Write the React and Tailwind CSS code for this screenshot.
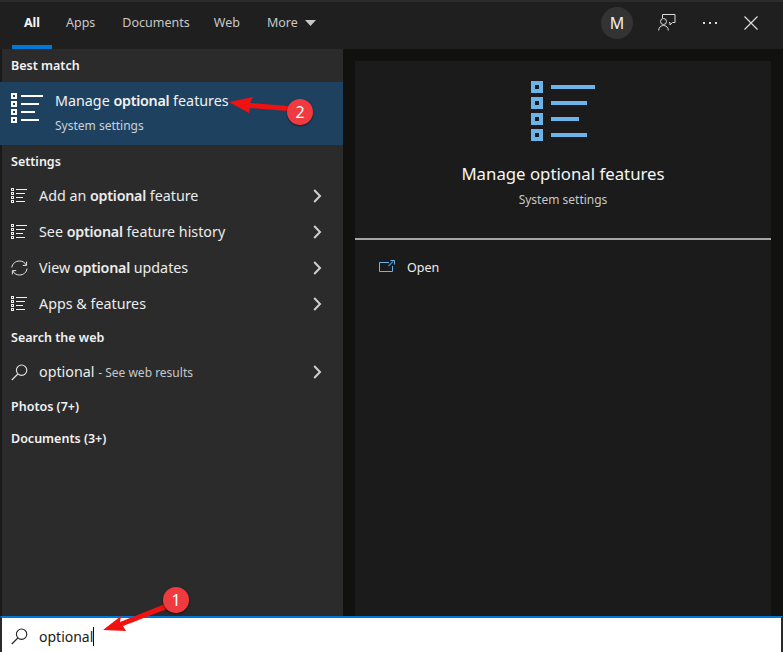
import React from "react";

const font = { fontFamily: '"Noto Sans", sans-serif' };

function ListIcon() {
  // small settings list glyph
  return (
    <svg width="17" height="16" viewBox="0 0 17 16" fill="none" stroke="#f0f0f0" strokeWidth="1">
      <rect x="0.5" y="0.5" width="2" height="2" />
      <rect x="0.5" y="4.5" width="2" height="2" />
      <rect x="0.5" y="8.5" width="2" height="2" />
      <rect x="0.5" y="12.5" width="2" height="2" />
      <path d="M5 1.5h11M5 5.5h9M5 9.5h7M5 13.5h9" />
    </svg>
  );
}

function RefreshIcon() {
  return (
    <svg width="17" height="16" viewBox="0 0 17 16" fill="none" stroke="#e6e6e6" strokeWidth="1">
      <path d="M0.8 7.5C1.5 3.5 4.5 1 8.5 1C11.5 1 14 2.5 15.2 5" />
      <path d="M15.6 1.6v3.8h-3.8" />
      <path d="M16 8.5C15.5 12.5 12.5 15 8.5 15C5.5 15 3 13.5 1.8 11" />
      <path d="M1.4 14.4v-3.8h3.8" />
    </svg>
  );
}

function SearchIcon({ color = "#e6e6e6" }) {
  return (
    <svg width="17" height="17" viewBox="0 0 17 17" fill="none" stroke={color} strokeWidth="1.1">
      <circle cx="10.6" cy="6.2" r="5.2" />
      <path d="M6.8 10L0.8 16" />
    </svg>
  );
}

function Chevron() {
  return (
    <svg width="9" height="14" viewBox="0 0 9 14" fill="none" stroke="#cfcfcf" strokeWidth="2">
      <path d="M1.2 1L7 7L1.2 13" />
    </svg>
  );
}

function Heading({ className = "pt-[1px]", children }) {
  return <div className={"h-[32px] pl-[11px] flex items-center text-[12.5px] font-semibold text-[#f2f2f2] " + className}>{children}</div>;
}

function Row({ icon, children }) {
  return (
    <div className="h-[36px] pl-[11px] pr-[21px] flex items-center text-[14.3px] text-[#ececec]">
      <div className="w-[28px] flex items-center">{icon}</div>
      <div className="flex-1">{children}</div>
      <Chevron />
    </div>
  );
}

function Hit({ children }) {
  return <span className="font-semibold tracking-[-0.25px]">{children}</span>;
}

function BigList() {
  return (
    <svg width="64" height="60" viewBox="0 0 64 60" fill="none">
      {[0, 16, 32, 48].map((y) => (
        <g key={y}>
          <rect x="0" y={y} width="12" height="12" fill="#6cb3ea" />
          <rect x="4" y={y + 4} width="4" height="4" fill="#1c1b1b" />
        </g>
      ))}
      <path d="M20 4h44v4H20zM20 20h36v4H20zM20 36h28v4H20zM20 52h36v4H20z" fill="#6cb3ea" />
    </svg>
  );
}

function Badge({ className, children }) {
  return (
    <div className={"absolute w-[26px] h-[26px] rounded-full bg-[#ef3b3f] text-white text-[16px] flex items-center justify-center shadow-[0_1px_2px_rgba(0,0,0,0.6)] " + className}>
      {children}
    </div>
  );
}

export default function App() {
  return (
    <div style={font} className="relative w-[783px] h-[652px] overflow-hidden bg-[#111110] flex flex-col">
      {/* top bar */}
      <div className="h-[49px] shrink-0 bg-[#1f1f1f] border-t-2 border-[#2b2b2b] flex items-stretch justify-between">
        <div className="flex items-stretch pl-[12px] text-[12.5px] text-[#c8c8c8]">
          <div className="w-[40px] pb-[1px] flex items-center justify-center font-bold text-[#f5f5f5] border-b-[4px] border-[#0078d7]">All</div>
          <div className="ml-[14px] pb-[5px] flex items-center">Apps</div>
          <div className="ml-[27px] pb-[5px] flex items-center">Documents</div>
          <div className="ml-[24px] pb-[5px] flex items-center">Web</div>
          <div className="ml-[27px] pb-[5px] flex items-center gap-[7px]">
            More
            <svg width="11" height="6" viewBox="0 0 11 6"><path d="M0 0h11L5.5 6z" fill="#c8c8c8" /></svg>
          </div>
        </div>
        <div className="flex items-center pb-[6px] pr-[25px] text-[#dcdcdc]">
          <div className="w-[32px] h-[32px] rounded-full bg-[#333333] flex items-center justify-center text-[16px] text-[#f0f0f0]">M</div>
          <svg className="ml-[25px]" width="18" height="17" viewBox="0 0 18 17" fill="none" stroke="#dcdcdc" strokeWidth="1">
            <path d="M4.5 4V0.5h12.5v8h-2.5l-2.5 2.5v-2.5h-1" />
            <circle cx="5.5" cy="7.5" r="3" />
            <path d="M0.7 16.5c0-3 2-5 4.8-5s4.8 2 4.8 5" />
          </svg>
          <div className="ml-[27px] flex gap-[4px]">
            <span className="w-[2px] h-[2px] bg-[#dcdcdc]" />
            <span className="w-[2px] h-[2px] bg-[#dcdcdc]" />
            <span className="w-[2px] h-[2px] bg-[#dcdcdc]" />
          </div>
          <svg className="ml-[27px]" width="14" height="14" viewBox="0 0 14 14" stroke="#dcdcdc" strokeWidth="1.2">
            <path d="M0.5 0.5L13.5 13.5M13.5 0.5L0.5 13.5" />
          </svg>
        </div>
      </div>

      <div className="flex-1 flex min-h-0">
        {/* results list */}
        <div className="w-[343px] shrink-0 bg-[#2b2b2b] border-l-2 border-[#1a1a1a]">
          <div className="h-[33px] pl-[9px] pt-[2px] flex items-center text-[12.5px] font-semibold text-[#f2f2f2]">Best match</div>
          <div className="h-[63px] bg-[#1f4160] -ml-[2px] pl-[11px] pt-[9px] flex items-start">
            <svg className="mt-[2px]" width="33" height="31" viewBox="0 0 33 31" fill="none">
              {[0, 8, 16, 24].map((y) => (
                <rect key={y} x="1" y={y + 1} width="4" height="4" stroke="#ffffff" strokeWidth="2" />
              ))}
              <path d="M10 3h22M10 11h18M10 19h14M10 27h18" stroke="#ffffff" strokeWidth="2" />
            </svg>
            <div className="ml-[11px]">
              <div className="text-[14.3px] leading-[20px] text-[#f2f2f2]">Manage <Hit>optional</Hit> features</div>
              <div className="mt-[7px] text-[12px] leading-[16px] text-[#c9d2da]">System settings</div>
            </div>
          </div>
          <div className="h-[33px] pl-[9px] pt-[2px] flex items-center text-[12.5px] font-semibold text-[#f2f2f2]">Settings</div>
          <div className="-ml-[2px]">
            <Row icon={<ListIcon />}>Add an <Hit>optional</Hit> feature</Row>
            <Row icon={<ListIcon />}>See <Hit>optional</Hit> feature history</Row>
            <Row icon={<RefreshIcon />}>View <Hit>optional</Hit> updates</Row>
            <Row icon={<ListIcon />}>Apps &amp; features</Row>
          </div>
          <div className="-ml-[2px]">
            <Heading>Search the web</Heading>
            <Row icon={<SearchIcon />}>optional <span className="text-[12px] text-[#c8c8c8]">- See web results</span></Row>
            <Heading className="pt-[3px]">Photos (7+)</Heading>
            <Heading className="pt-[3px]">Documents (3+)</Heading>
          </div>
        </div>

        {/* preview pane */}
        <div className="flex-1 pl-[12px] pr-[12px] pt-[12px]">
          <div className="h-full bg-[#1c1b1b] flex flex-col">
            <div className="flex flex-col items-center pt-[20px] h-[177px]">
              <BigList />
              <div className="mt-[21px] text-[16.8px] leading-[24px] text-[#f5f5f5]">Manage optional features</div>
              <div className="mt-[6px] text-[12px] leading-[16px] text-[#c8c8c8]">System settings</div>
            </div>
            <div className="h-[2px] bg-[#a6a6a6]" />
            <div className="mt-[19px] pl-[24px] flex items-center">
              <svg className="mb-[4px]" width="16" height="12" viewBox="0 0 16 12" fill="none">
                <path d="M10 2.5H0.5v9h13V6" stroke="#6cb3ea" strokeWidth="1" />
                <path d="M9.5 6L14 1.5" stroke="#3f7fb5" strokeWidth="1.6" />
                <path d="M11.5 0.5h4v4" stroke="#6cb3ea" strokeWidth="1" />
              </svg>
              <span className="ml-[12px] text-[12.5px] text-[#ececec]">Open</span>
            </div>
          </div>
        </div>
      </div>

      {/* search box */}
      <div className="h-[36px] shrink-0 bg-white border-t-2 border-[#0078d7] border-x-2 border-x-[#2b2b2b] pl-[9px] pt-[3px] flex items-center text-[14px] text-[#1a1a1a]">
        <SearchIcon color="#222222" />
        <span className="ml-[11px]">optional</span>
        <span className="w-[1px] h-[19px] bg-black" />
      </div>

      {/* callouts */}
      <svg className="absolute left-0 top-0 pointer-events-none" width="783" height="652" viewBox="0 0 783 652">
        <path d="M229 102L253 97L250 103L288 106L288 111L250 108L249 113Z" fill="#f21111" />
        <path d="M103 630L121 616L120 622L165 604L167 609L123 626L126 631Z" fill="#f21111" />
      </svg>
      <Badge className="left-[287px] top-[99px]">2</Badge>
      <Badge className="left-[163px] top-[587px]">1</Badge>
    </div>
  );
}
